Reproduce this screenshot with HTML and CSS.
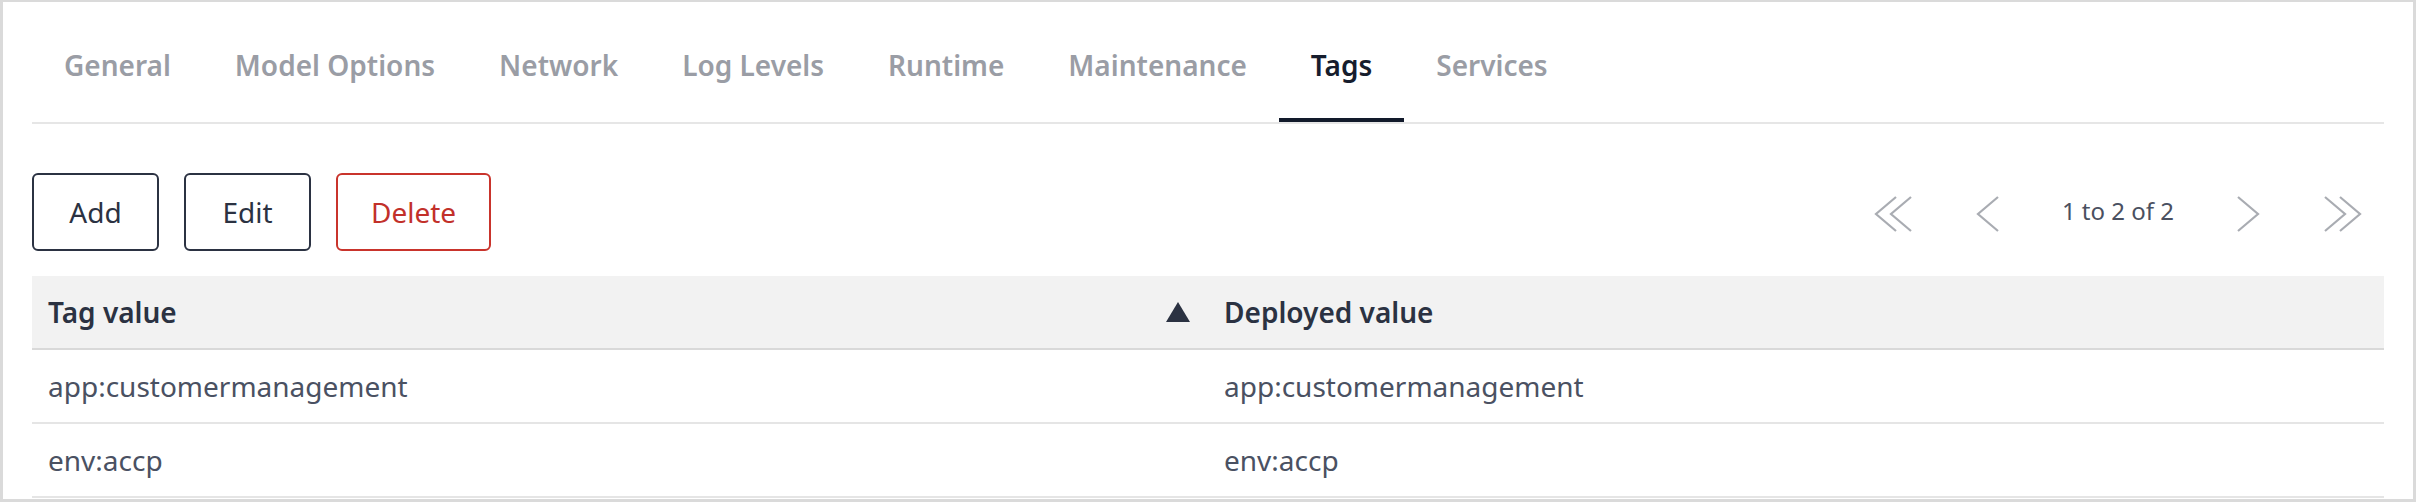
FILE: index.html
```html
<!DOCTYPE html>
<html lang="en">
<head>
<meta charset="utf-8">
<title>Tags</title>
<link rel="stylesheet" href="styles.css">
</head>
<body>
<div class="frame">
  <nav class="tabs">
    <div class="tab">General</div>
    <div class="tab">Model Options</div>
    <div class="tab">Network</div>
    <div class="tab">Log Levels</div>
    <div class="tab">Runtime</div>
    <div class="tab">Maintenance</div>
    <div class="tab active">Tags</div>
    <div class="tab">Services</div>
  </nav>
  <div class="toolbar">
    <div class="actions">
      <button class="btn">Add</button>
      <button class="btn">Edit</button>
      <button class="btn danger">Delete</button>
    </div>
    <div class="pager">
      <span class="pg-btn"><svg width="44" height="36" viewBox="0 0 44 36"><path d="M26 1 L6 18 L26 35 M41 1 L21 18 L41 35" fill="none" stroke="#a9acb2" stroke-width="2.2"/></svg></span>
      <span class="pg-btn"><svg width="44" height="36" viewBox="0 0 44 36"><path d="M32 1 L12 18 L32 35" fill="none" stroke="#a9acb2" stroke-width="2.2"/></svg></span>
      <span class="pg-text">1 to 2 of 2</span>
      <span class="pg-btn"><svg width="44" height="36" viewBox="0 0 44 36"><path d="M12 1 L32 18 L12 35" fill="none" stroke="#a9acb2" stroke-width="2.2"/></svg></span>
      <span class="pg-btn"><svg width="44" height="36" viewBox="0 0 44 36"><path d="M3 1 L23 18 L3 35 M18 1 L38 18 L18 35" fill="none" stroke="#a9acb2" stroke-width="2.2"/></svg></span>
    </div>
  </div>
  <div class="table">
    <div class="row head">
      <div class="cell">Tag value<svg class="sort" width="24" height="20" viewBox="0 0 24 20"><polygon points="12,0 24,20 0,20" fill="#2b3242"/></svg></div>
      <div class="cell">Deployed value</div>
    </div>
    <div class="row">
      <div class="cell">app:customermanagement</div>
      <div class="cell">app:customermanagement</div>
    </div>
    <div class="row">
      <div class="cell">env:accp</div>
      <div class="cell">env:accp</div>
    </div>
  </div>
</div>
</body>
</html>
```
FILE: styles.css
```css
* { box-sizing: border-box; }
html, body { margin: 0; padding: 0; background: #fff; }
body { font-family: "Noto Sans", "Open Sans", sans-serif; }

.frame {
  width: 2416px;
  height: 502px;
  border: 3px solid #dadada;
  border-top-width: 2px;
  padding: 0 29px;
  overflow: hidden;
}

.tabs {
  display: flex;
  border-bottom: 2px solid #e6e6e6;
}
.tab {
  padding: 44px 32px 34px;
  line-height: 38px;
  font-size: 28px;
  font-weight: 600;
  color: #9a9da5;
  border-bottom: 4px solid transparent;
  white-space: nowrap;
}
.tab.active {
  color: #161d2d;
  border-bottom-color: #121a2b;
}

.toolbar {
  display: flex;
  justify-content: space-between;
  align-items: center;
  height: 79px;
  margin-top: 48px;
}
.actions { display: flex; gap: 25px; }
.btn {
  height: 78px;
  min-width: 127px;
  padding: 0 33px;
  border: 2px solid #2b3242;
  border-radius: 6px;
  background: #fff;
  color: #2b3242;
  font-family: "Noto Sans", sans-serif;
  font-size: 28px;
  line-height: 36px;
}
.btn.danger { border-color: #c9342c; color: #c2302a; }

.pager {
  display: flex;
  align-items: center;
  gap: 52px;
  margin-right: 18px;
  padding-top: 4px;
}
.pg-btn { display: flex; width: 44px; height: 36px; }
.pg-text { font-size: 24px; color: #4a5060; line-height: 34px; margin-top: -5px; }

.table { margin-top: 25px; }
.row {
  display: grid;
  grid-template-columns: 1fr 1fr;
  height: 74px;
  border-bottom: 2px solid #e5e5e5;
}
.row.head { background: #f2f2f2; border-bottom-color: #d9d9d9; }
.cell {
  display: flex;
  align-items: center;
  padding: 0 16px;
  font-size: 28px;
  color: #4a5162;
}
.head .cell { font-weight: 600; color: #2b3242; }
.sort { margin-left: auto; margin-right: 2px; }
```
